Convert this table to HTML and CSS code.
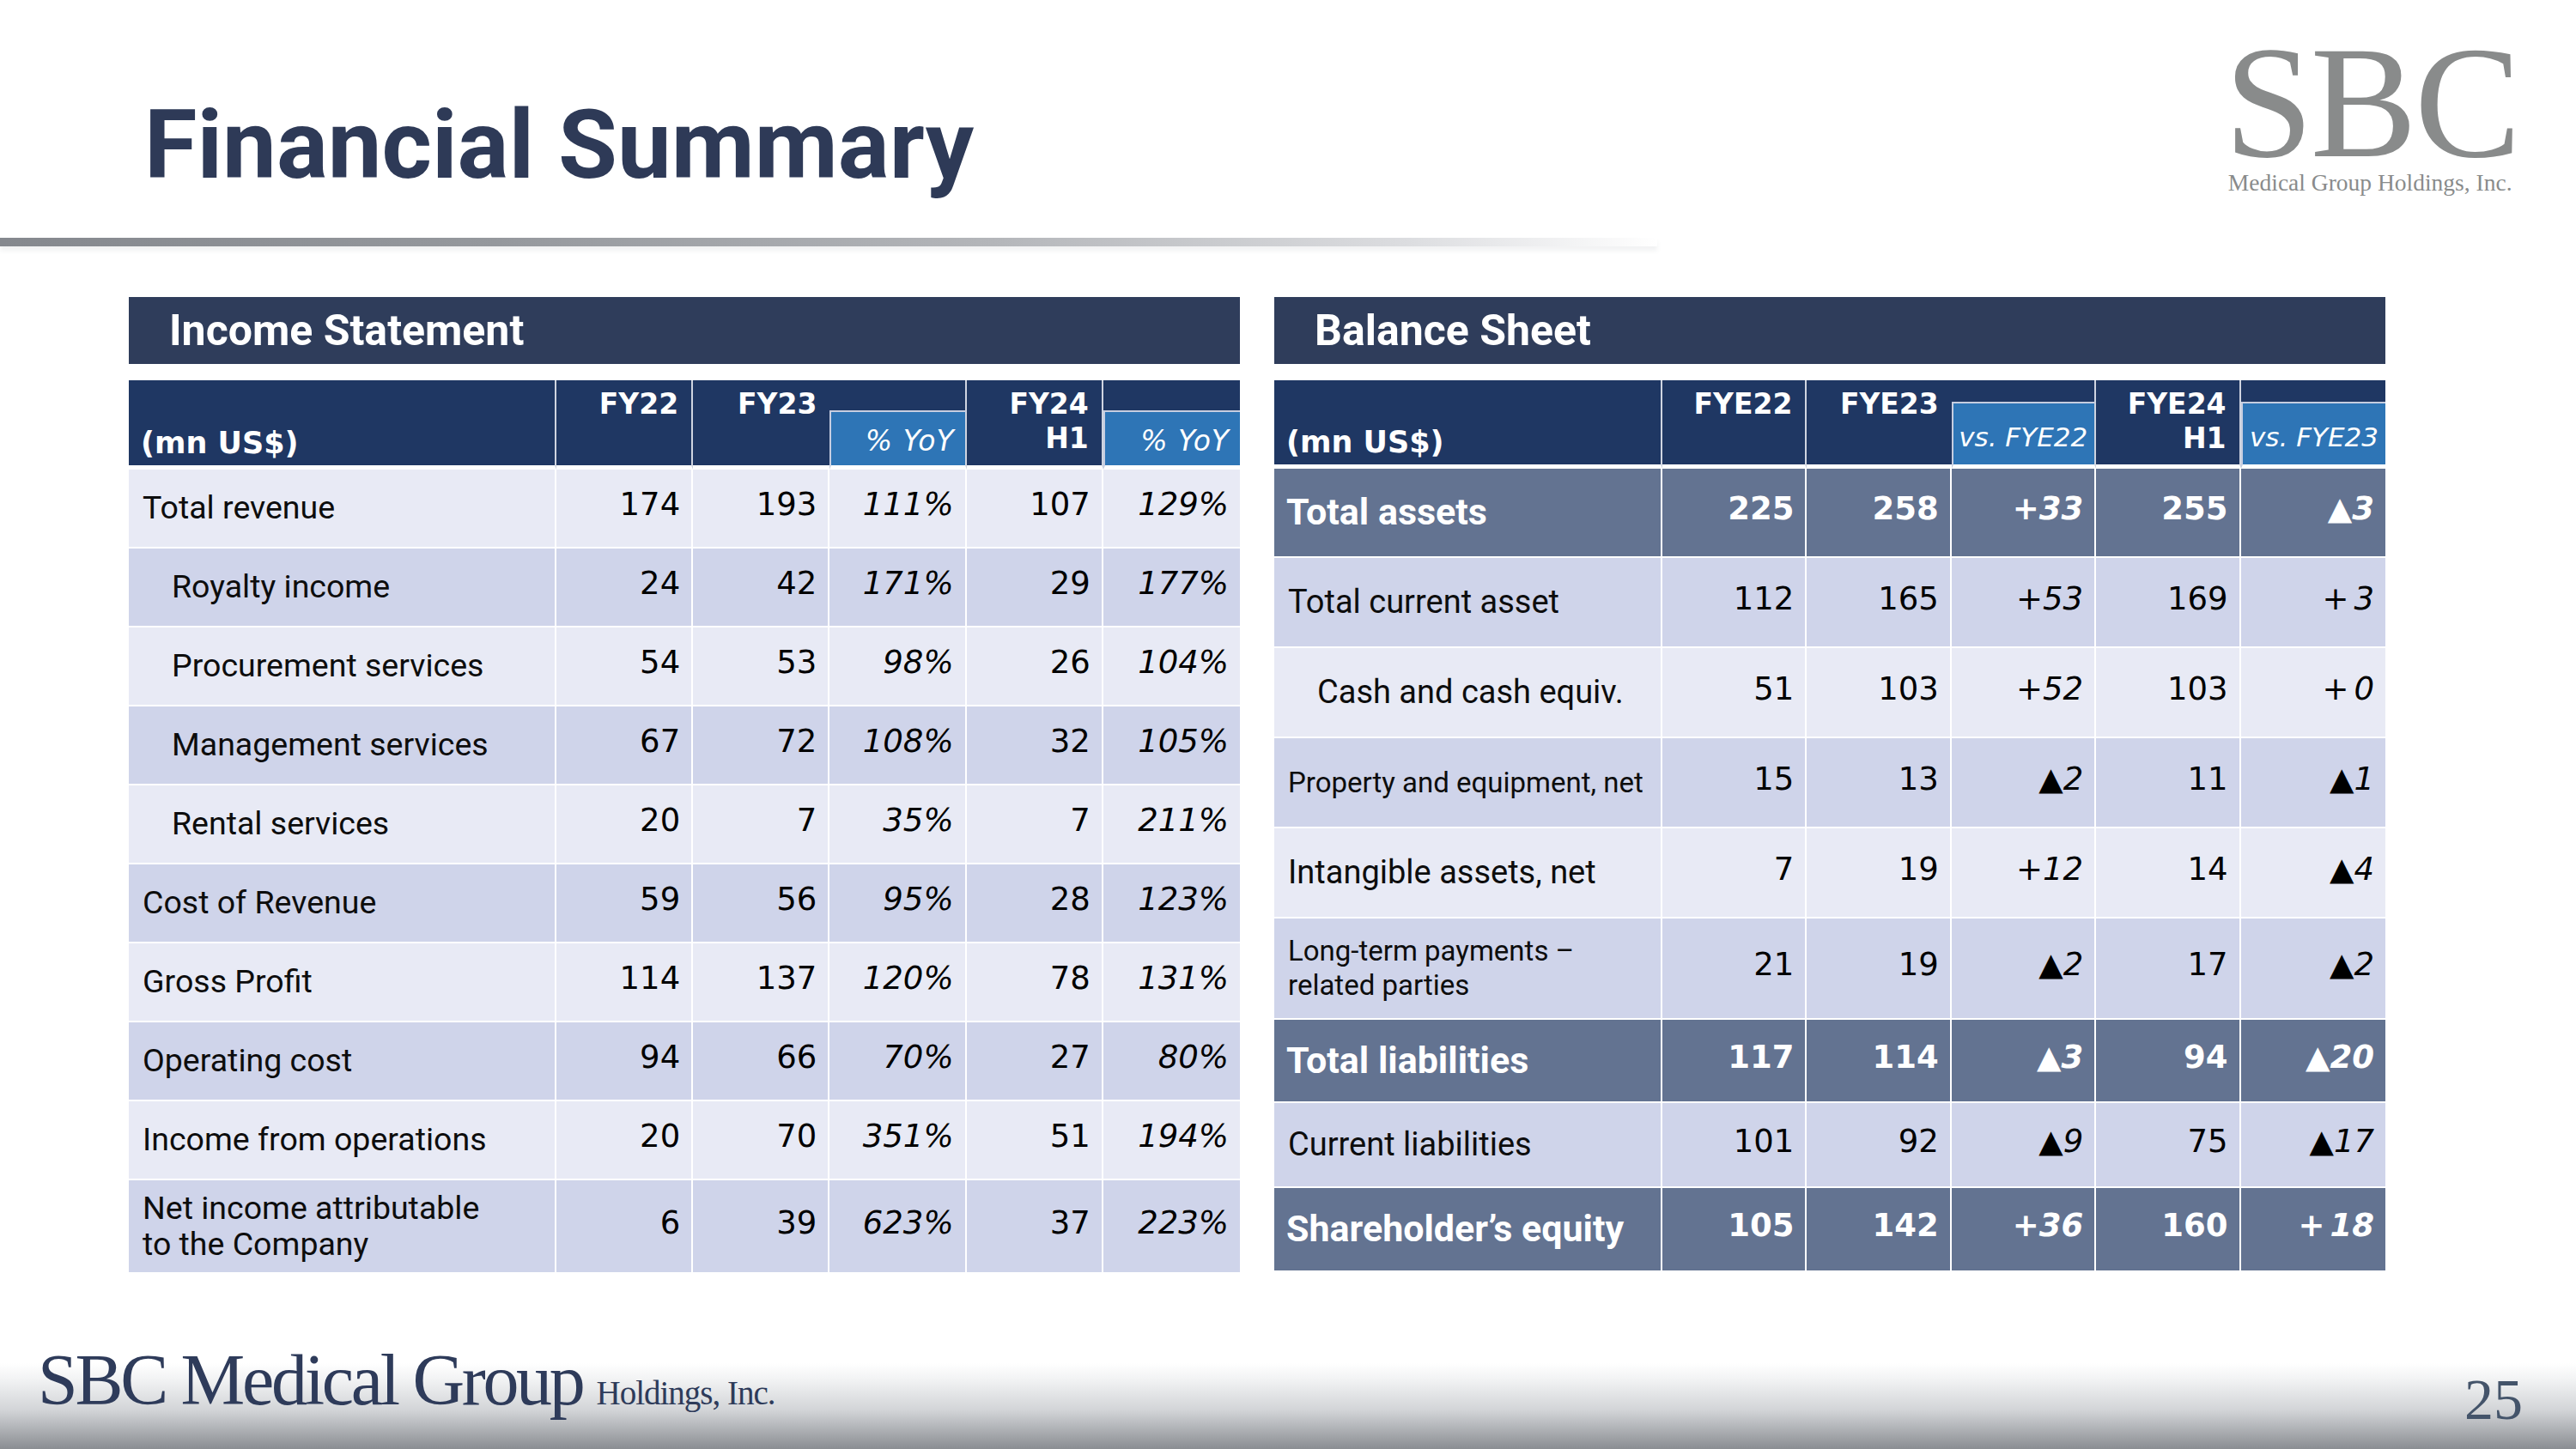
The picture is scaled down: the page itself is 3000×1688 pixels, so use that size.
FILE: index.html
```html
<!DOCTYPE html>
<html lang="en">
<head>
<meta charset="utf-8">
<title>Financial Summary</title>
<link rel="stylesheet" href="styles.css">
</head>
<body>
<header class="top">
  <h1 class="title">Financial Summary</h1>
  <div class="logo">
    <div class="logo-mark">SBC</div>
    <div class="logo-sub">Medical Group Holdings, Inc.</div>
  </div>
</header>
<div class="rule"></div>

<main class="panels">
  <section class="panel">
    <div class="bar">Income Statement</div>
    <table class="fin is">
      <colgroup><col class="c0"><col><col><col><col><col></colgroup>
      <thead>
        <tr class="hr1">
          <th class="unit" rowspan="2">(mn US$)</th>
          <th class="yr" rowspan="2">FY22</th>
          <th class="yr join" rowspan="2">FY23</th>
          <th class="cap"></th>
          <th class="yr" rowspan="2">FY24<br>H1</th>
          <th class="cap last"></th>
        </tr>
        <tr class="hr2">
          <th class="sub">% YoY</th>
          <th class="sub last">% YoY</th>
        </tr>
      </thead>
      <tbody>
        <tr class="lt"><td class="lb">Total revenue</td><td class="n">174</td><td class="n">193</td><td class="n it">111%</td><td class="n">107</td><td class="n it last">129%</td></tr>
        <tr class="md"><td class="lb ind">Royalty income</td><td class="n">24</td><td class="n">42</td><td class="n it">171%</td><td class="n">29</td><td class="n it last">177%</td></tr>
        <tr class="lt"><td class="lb ind">Procurement services</td><td class="n">54</td><td class="n">53</td><td class="n it">98%</td><td class="n">26</td><td class="n it last">104%</td></tr>
        <tr class="md"><td class="lb ind">Management services</td><td class="n">67</td><td class="n">72</td><td class="n it">108%</td><td class="n">32</td><td class="n it last">105%</td></tr>
        <tr class="lt"><td class="lb ind">Rental services</td><td class="n">20</td><td class="n">7</td><td class="n it">35%</td><td class="n">7</td><td class="n it last">211%</td></tr>
        <tr class="md"><td class="lb">Cost of Revenue</td><td class="n">59</td><td class="n">56</td><td class="n it">95%</td><td class="n">28</td><td class="n it last">123%</td></tr>
        <tr class="lt"><td class="lb">Gross Profit</td><td class="n">114</td><td class="n">137</td><td class="n it">120%</td><td class="n">78</td><td class="n it last">131%</td></tr>
        <tr class="md"><td class="lb">Operating cost</td><td class="n">94</td><td class="n">66</td><td class="n it">70%</td><td class="n">27</td><td class="n it last">80%</td></tr>
        <tr class="lt"><td class="lb">Income from operations</td><td class="n">20</td><td class="n">70</td><td class="n it">351%</td><td class="n">51</td><td class="n it last">194%</td></tr>
        <tr class="md tall"><td class="lb">Net income attributable<br>to the Company</td><td class="n">6</td><td class="n">39</td><td class="n it">623%</td><td class="n">37</td><td class="n it last">223%</td></tr>
      </tbody>
    </table>
  </section>

  <section class="panel">
    <div class="bar">Balance Sheet</div>
    <table class="fin bs">
      <colgroup><col class="c0"><col><col><col><col><col></colgroup>
      <thead>
        <tr class="hr1">
          <th class="unit" rowspan="2">(mn US$)</th>
          <th class="yr" rowspan="2">FYE22</th>
          <th class="yr join" rowspan="2">FYE23</th>
          <th class="cap"></th>
          <th class="yr" rowspan="2">FYE24<br>H1</th>
          <th class="cap last"></th>
        </tr>
        <tr class="hr2">
          <th class="sub">vs. FYE22</th>
          <th class="sub last">vs. FYE23</th>
        </tr>
      </thead>
      <tbody>
        <tr class="sl r1"><td class="lb b">Total assets</td><td class="n">225</td><td class="n">258</td><td class="n it"><span class="sg">+</span>33</td><td class="n">255</td><td class="n it last"><span class="sg">▲</span>3</td></tr>
        <tr class="md r2"><td class="lb">Total current asset</td><td class="n">112</td><td class="n">165</td><td class="n it"><span class="sg">+</span>53</td><td class="n">169</td><td class="n it last"><span class="sg sp">+</span>3</td></tr>
        <tr class="lt r3"><td class="lb ind">Cash and cash equiv.</td><td class="n">51</td><td class="n">103</td><td class="n it"><span class="sg">+</span>52</td><td class="n">103</td><td class="n it last"><span class="sg sp">+</span>0</td></tr>
        <tr class="md r4"><td class="lb sm">Property and equipment, net</td><td class="n">15</td><td class="n">13</td><td class="n it"><span class="sg">▲</span>2</td><td class="n">11</td><td class="n it last"><span class="sg">▲</span>1</td></tr>
        <tr class="lt r5"><td class="lb">Intangible assets, net</td><td class="n">7</td><td class="n">19</td><td class="n it"><span class="sg">+</span>12</td><td class="n">14</td><td class="n it last"><span class="sg">▲</span>4</td></tr>
        <tr class="md r6"><td class="lb sm">Long-term payments –<br>related parties</td><td class="n">21</td><td class="n">19</td><td class="n it"><span class="sg">▲</span>2</td><td class="n">17</td><td class="n it last"><span class="sg">▲</span>2</td></tr>
        <tr class="sl r7"><td class="lb b">Total liabilities</td><td class="n">117</td><td class="n">114</td><td class="n it"><span class="sg">▲</span>3</td><td class="n">94</td><td class="n it last"><span class="sg">▲</span>20</td></tr>
        <tr class="md r8"><td class="lb">Current liabilities</td><td class="n">101</td><td class="n">92</td><td class="n it"><span class="sg">▲</span>9</td><td class="n">75</td><td class="n it last"><span class="sg">▲</span>17</td></tr>
        <tr class="sl r9"><td class="lb b">Shareholder’s equity</td><td class="n">105</td><td class="n">142</td><td class="n it"><span class="sg">+</span>36</td><td class="n">160</td><td class="n it last"><span class="sg sp">+</span>18</td></tr>
      </tbody>
    </table>
  </section>
</main>

<footer class="foot">
  <div class="flogo"><span class="fbig">SBC Medical Group</span><span class="fsmall">Holdings, Inc.</span></div>
  <div class="pnum">25</div>
</footer>
</body>
</html>
```

FILE: styles.css
```css
* { box-sizing: border-box; }
html, body { margin: 0; padding: 0; }
body {
  width: 3000px;
  height: 1688px;
  overflow: hidden;
  background: #ffffff;
  font-family: Roboto, "Noto Sans", sans-serif;
  display: flex;
  flex-direction: column;
}

/* ---------- top ---------- */
.top {
  height: 277px;
  display: flex;
  justify-content: space-between;
  align-items: flex-start;
}
.title {
  margin: 113px 0 0 0;
  padding-left: 168px;
  font-family: Roboto, sans-serif;
  font-weight: 700;
  font-size: 112px;
  line-height: 1;
  color: #2e3a57;
}
.logo {
  padding: 44px 70px 0 0;
  display: flex;
  flex-direction: column;
  align-items: center;
  color: #898b8b;
  font-family: "Liberation Serif", serif;
}
.logo-mark {
  font-size: 186px;
  line-height: 150px;
  letter-spacing: -3px;
  margin-right: -3px;
}
.logo-sub {
  margin-top: 5px;
  font-size: 27.5px;
  line-height: 1;
}

.rule {
  height: 10px;
  width: 1930px;
  background: linear-gradient(to right, #85888e 0%, #95989d 30%, #b4b6ba 60%, #dcdde0 85%, rgba(255,255,255,0) 100%);
  box-shadow: 0 5px 5px rgba(120,125,135,0.10);
}

/* ---------- panels ---------- */
.panels {
  display: flex;
  gap: 40px;
  padding-left: 150px;
  margin-top: 59px;
}
.panel {
  width: 1294px;
  display: flex;
  flex-direction: column;
}
.bar {
  height: 78px;
  display: flex;
  align-items: center;
  padding-left: 47px;
  background: #2f3d5b;
  color: #ffffff;
  font-family: Roboto, sans-serif;
  font-weight: 700;
  font-size: 50px;
}

.fin {
  margin-top: 19px;
  width: 1294px;
  table-layout: fixed;
  border-collapse: separate;
  border-spacing: 0;
}
.is col.c0 { width: 498px; }
.bs col.c0 { width: 452px; }

.fin th, .fin td {
  padding: 0;
  border-right: 2px solid #ffffff;
  border-bottom: 2px solid #ffffff;
}
.fin .last { border-right: 0; }

/* header */
.fin th {
  background: #1f3763;
  color: #ffffff;
  font-family: "DejaVu Sans", Verdana, sans-serif;
  font-weight: 700;
  font-size: 33px;
  line-height: 40px;
  white-space: nowrap;
  border-right-color: #cfd4e0;
}
.fin th.last { border-right: 0; }
.fin th.unit {
  text-align: left;
  vertical-align: bottom;
  padding: 0 0 6px 14px;
  font-size: 35px;
  border-bottom: 5px solid #ffffff;
}
.fin th.yr {
  text-align: right;
  vertical-align: top;
  padding: 8px 15px 0 0;
  border-bottom: 5px solid #ffffff;
}
.fin th.join { border-right: 0; }
.fin th.cap {
  border-bottom: 2px solid #c6cde0;
}
.fin th.sub {
  background: #2e75b6;
  font-weight: 400;
  font-style: italic;
  font-size: 33px;
  letter-spacing: 1px;
  text-align: right;
  vertical-align: bottom;
  padding: 0 12px 8px 0;
  border-left: 2px solid #c6cde0;
  border-bottom: 5px solid #ffffff;
}
.is .hr1 { height: 37px; }
.is .hr2 { height: 67px; }
.bs .hr1 { height: 27px; }
.bs .hr2 { height: 76px; }
.bs th.sub { padding: 0 8px 12px 0; font-size: 31px; letter-spacing: 0; }

/* body */
.fin td { vertical-align: middle; }
.fin td.lb {
  font-family: Roboto, sans-serif;
  font-size: 37.5px;
  line-height: 1.1;
  color: #0d0d0d;
  padding-left: 16px;
}
.bs td.lb { font-size: 38px; }
.fin td.ind { padding-left: 50px; }
.bs td.sm { font-size: 33px; line-height: 1.2; }
.bs td.b { font-weight: 700; font-size: 43px; color: #ffffff; padding-left: 14px; }
.fin td.n {
  font-family: "DejaVu Sans", Verdana, sans-serif;
  font-size: 37px;
  color: #000000;
  text-align: right;
  white-space: nowrap;
  padding: 0 13px 9px 0;
}
.fin td.it { font-style: italic; }
.fin .sg { font-style: normal; }
.fin .sg.sp { margin-right: 6px; }

.fin tr.lt td { background: #e8eaf5; }
.fin tr.md td { background: #cfd4ea; }
.fin tr.sl td { background: #637391; }
.fin tr.sl td.n { color: #ffffff; font-weight: 700; }

.is tbody tr { height: 92px; }
.is tbody tr.tall { height: 107px; }
.is tbody tr.tall td { border-bottom: 0; }

.bs tbody tr.r1 { height: 104px; }
.bs tbody tr.r2 { height: 105px; }
.bs tbody tr.r3 { height: 105px; }
.bs tbody tr.r4 { height: 105px; }
.bs tbody tr.r5 { height: 105px; }
.bs tbody tr.r6 { height: 118px; }
.bs tbody tr.r7 { height: 97px; }
.bs tbody tr.r8 { height: 99px; }
.bs tbody tr.r9 { height: 96px; }
.bs tbody tr.r9 td { border-bottom: 0; }

/* ---------- footer ---------- */
.foot {
  margin-top: auto;
  height: 100px;
  display: flex;
  justify-content: space-between;
  align-items: flex-end;
  padding: 0 62px 0 44px;
  background: linear-gradient(to bottom, #ffffff 0%, #f1f2f3 20%, #d2d4d7 55%, #8a8d92 100%);
}
.flogo {
  display: flex;
  align-items: baseline;
  color: #2e3b5a;
  font-family: "Liberation Serif", serif;
  line-height: 1;
  padding-bottom: 38px;
}
.fbig {
  font-size: 84px;
  letter-spacing: -3.3px;
}
.fsmall {
  margin-left: 16px;
  font-size: 39px;
  letter-spacing: -1px;
}
.pnum {
  font-family: "Liberation Serif", serif;
  font-size: 68px;
  line-height: 1;
  color: #44546a;
  padding-bottom: 24px;
}
```
